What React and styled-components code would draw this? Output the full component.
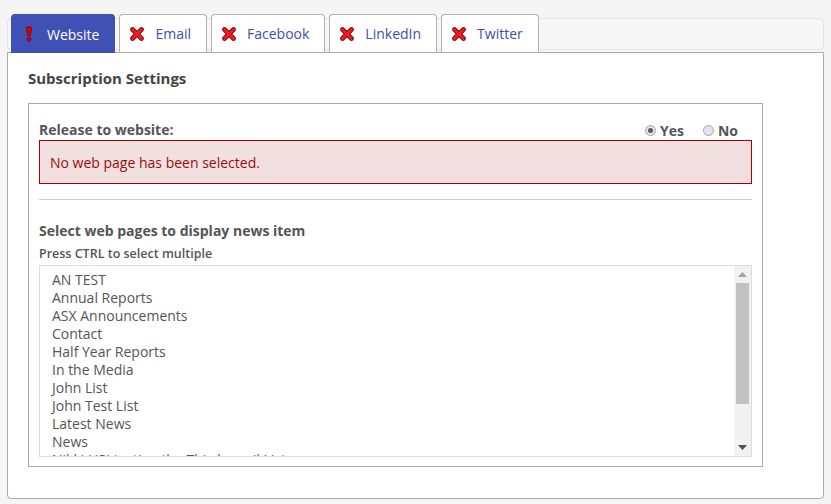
import React, { useState } from 'react'
import styled, { createGlobalStyle } from 'styled-components'

const GlobalStyle = createGlobalStyle`
  body {
    margin: 0;
    background: #f5f5f5;
    font-family: "Open Sans", "Noto Sans", sans-serif;
    color: #555;
  }
`

const tabs = [
  { name: 'Website', status: 'warn' },
  { name: 'Email', status: 'error' },
  { name: 'Facebook', status: 'error' },
  { name: 'LinkedIn', status: 'error' },
  { name: 'Twitter', status: 'error' },
]

const pages = [
  'AN TEST',
  'Annual Reports',
  'ASX Announcements',
  'Contact',
  'Half Year Reports',
  'In the Media',
  'John List',
  'John Test List',
  'Latest News',
  'News',
  'Nikki HSI testing the Third email List',
]

const Page = styled.div`
  width: 831px;
  height: 504px;
  padding: 0 7px;
  box-sizing: border-box;
  overflow: hidden;
`

const TabStrip = styled.div`
  margin-top: 18px;
  height: 32px;
  box-sizing: border-box;
  border: 1px solid #e4e4e4;
  border-radius: 4px;
  background: #f7f7f7;
  display: flex;
  align-items: flex-start;
  gap: 4px;
  padding-left: 3px;
`

const Tab = styled.div`
  position: relative;
  z-index: 1;
  margin-top: -5px;
  height: ${(p) => (p.$active ? '39px' : '38px')};
  box-sizing: border-box;
  display: flex;
  align-items: center;
  gap: 11px;
  padding: 0 15px 0 10px;
  border: 1px solid ${(p) => (p.$active ? '#3f51b5' : '#b3b3b3')};
  border-bottom: none;
  border-radius: 4px 4px 0 0;
  background: ${(p) => (p.$active ? '#3f51b5' : '#fff')};
  color: ${(p) => (p.$active ? '#fff' : '#3f4db0')};
  font-size: 14px;
  cursor: pointer;
`

const Panel = styled.div`
  margin-top: 2px;
  height: 447px;
  box-sizing: border-box;
  background: #fff;
  border: 1px solid #aaa;
  border-radius: 0 0 4px 4px;
  padding: 15px 60px 0 20px;
`

const Title = styled.h3`
  margin: 0 0 15px;
  font-size: 15px;
  font-weight: 700;
  color: #444;
  line-height: 20px;
`

const Box = styled.div`
  border: 1px solid #aaa;
  height: 364px;
  box-sizing: border-box;
  padding: 16px 10px 0 10px;
`

const Row = styled.div`
  display: flex;
  align-items: center;
  justify-content: space-between;
  height: 20px;
`

const Label = styled.div`
  font-size: 14px;
  font-weight: 700;
  color: #555;
  line-height: 20px;
`

const Radios = styled.div`
  display: flex;
  gap: 19px;
  padding-right: 14px;
`

const RadioLabel = styled.label`
  display: flex;
  align-items: center;
  gap: 4px;
  font-size: 14px;
  font-weight: 700;
  color: #555;
  cursor: pointer;
`

const Dot = styled.span`
  width: 11px;
  height: 11px;
  border-radius: 50%;
  box-sizing: border-box;
  border: 1px solid #a6a6a6;
  background: #e4e4e4;
  display: flex;
  align-items: center;
  justify-content: center;
  &::after {
    content: '';
    width: 5px;
    height: 5px;
    border-radius: 50%;
    background: ${(p) => (p.$on ? '#5a5a5a' : 'transparent')};
  }
`

const Alert = styled.div`
  height: 44px;
  box-sizing: border-box;
  border: 1px solid #a80000;
  background: #f2e0e1;
  color: #9b0a0a;
  font-size: 14px;
  display: flex;
  align-items: center;
  padding-left: 10px;
`

const Divider = styled.hr`
  margin: 15px 0 0;
  border: none;
  border-top: 1px solid #ccc;
`

const SubTitle = styled(Label)`
  margin-top: 21px;
`

const Hint = styled.div`
  font-size: 12.5px;
  font-weight: 600;
  color: #555;
  line-height: 18px;
  margin-top: 4px;
`

const List = styled.div`
  margin-top: 2px;
  height: 192px;
  box-sizing: border-box;
  border: 1px solid #ddd;
  display: flex;
`

const Items = styled.div`
  flex: 1;
  overflow: hidden;
  padding: 5px 0 0 12px;
`

const Item = styled.div`
  font-size: 14px;
  line-height: 18px;
  color: #555;
  white-space: nowrap;
`

const Scrollbar = styled.div`
  width: 17px;
  background: #f1f1f1;
  display: flex;
  flex-direction: column;
  align-items: center;
`

const Arrow = styled.div`
  height: 17px;
  display: flex;
  align-items: center;
  justify-content: center;
`

const Track = styled.div`
  flex: 1;
  width: 13px;
`

const Thumb = styled.div`
  height: 121px;
  background: #c1c1c1;
`

const WarnIcon = () => (
  <svg width="14" height="18" viewBox="0 0 14 18">
    <path d="M4.2 2.5 Q7 0.6 9.8 2.5 L8.4 10.6 H5.6 Z" fill="#d20000" stroke="#8a0000" strokeWidth="0.8" />
    <circle cx="7" cy="14.3" r="2" fill="#d20000" stroke="#8a0000" strokeWidth="0.8" />
  </svg>
)

const ErrorIcon = () => (
  <svg width="14" height="14" viewBox="0 0 14 14">
    <path d="M2.5 2.5 L11.5 11.5 M11.5 2.5 L2.5 11.5" stroke="#7a0000" strokeWidth="4.6" strokeLinecap="round" />
    <path d="M2.5 2.5 L11.5 11.5 M11.5 2.5 L2.5 11.5" stroke="#ee1c24" strokeWidth="3" strokeLinecap="round" />
  </svg>
)

export default function App() {
  const [release, setRelease] = useState('yes')
  return (
    <Page>
      <GlobalStyle />
      <TabStrip>
        {tabs.map((t, i) => (
          <Tab key={t.name} $active={i === 0}>
            {t.status === 'warn' ? <WarnIcon /> : <ErrorIcon />}
            {t.name}
          </Tab>
        ))}
      </TabStrip>
      <Panel>
        <Title>Subscription Settings</Title>
        <Box>
          <Row>
            <Label>Release to website:</Label>
            <Radios>
              <RadioLabel onClick={() => setRelease('yes')}>
                <Dot $on={release === 'yes'} />
                Yes
              </RadioLabel>
              <RadioLabel onClick={() => setRelease('no')}>
                <Dot $on={release === 'no'} />
                No
              </RadioLabel>
            </Radios>
          </Row>
          <Alert>No web page has been selected.</Alert>
          <Divider />
          <SubTitle>Select web pages to display news item</SubTitle>
          <Hint>Press CTRL to select multiple</Hint>
          <List>
            <Items>
              {pages.map((p) => (
                <Item key={p}>{p}</Item>
              ))}
            </Items>
            <Scrollbar>
              <Arrow>
                <svg width="9" height="5" viewBox="0 0 9 5">
                  <path d="M0 5 L4.5 0 L9 5 Z" fill="#a3a3a3" />
                </svg>
              </Arrow>
              <Track>
                <Thumb />
              </Track>
              <Arrow>
                <svg width="9" height="5" viewBox="0 0 9 5">
                  <path d="M0 0 L4.5 5 L9 0 Z" fill="#505050" />
                </svg>
              </Arrow>
            </Scrollbar>
          </List>
        </Box>
      </Panel>
    </Page>
  )
}
